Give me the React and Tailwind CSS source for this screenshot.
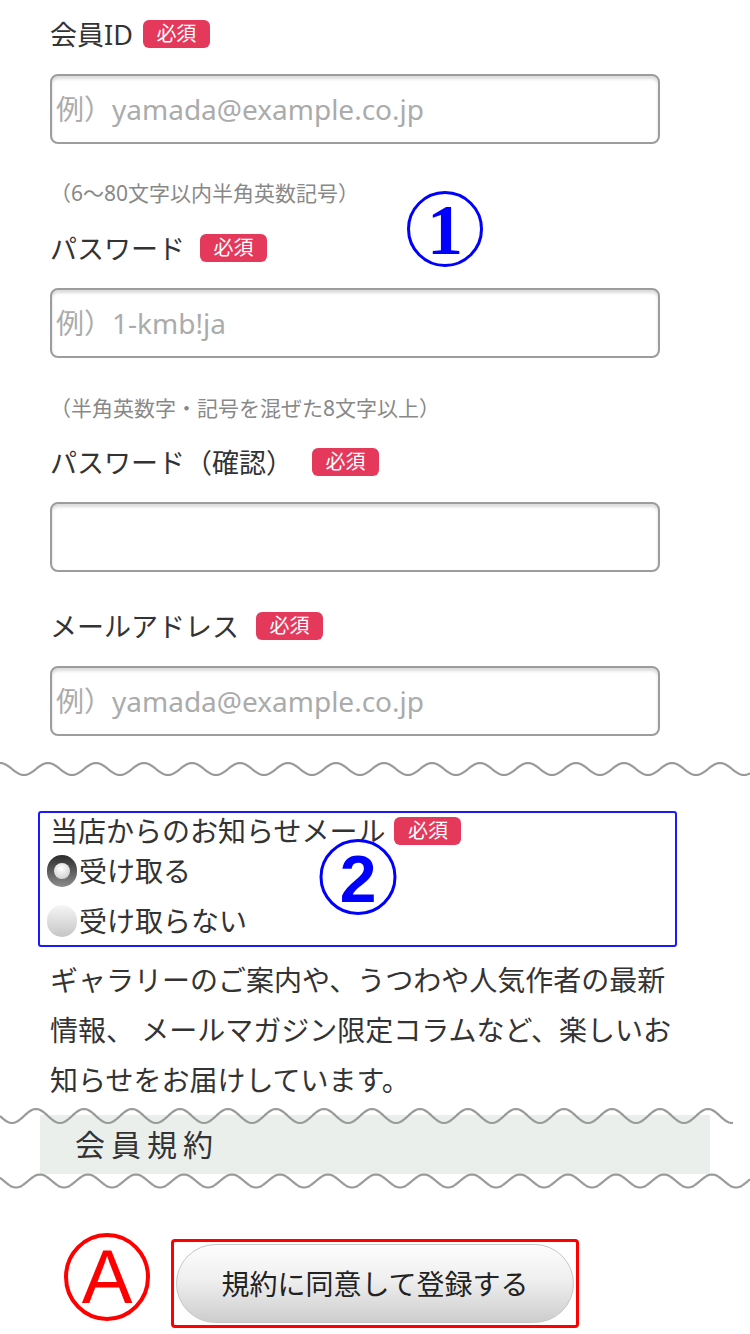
import React from "react";

function wavePath(width, amp, period, phase) {
  const pts = [];
  for (let x = 0; x <= width; x += 1) {
    const y = 10 - amp * Math.cos((2 * Math.PI * (x - phase)) / period);
    pts.push(`${x === 0 ? "M" : "L"}${x},${y.toFixed(2)}`);
  }
  return pts.join(" ");
}

function Wave({ width = 750, amp = 6, phase = 0 }) {
  return (
    <svg width={width} height="20" viewBox={`0 0 ${width} 20`} className="block">
      <path d={wavePath(width, amp, 48, phase)} fill="none" stroke="#9a9a9a" strokeWidth="2.2" />
    </svg>
  );
}

function Badge({ className }) {
  return (
    <span
      className={
        "inline-flex h-[28px] w-[67px] items-center justify-center rounded-[6px] bg-[#e4395b] text-[20px] leading-none text-white " +
        className
      }
    >
      必須
    </span>
  );
}

function Field({ label, gap, placeholder, className }) {
  return (
    <div className={className}>
      <div className="flex h-[40px] items-center">
        <span className="text-[27px] leading-none text-[#333]">{label}</span>
        <Badge className={gap} />
      </div>
      <input
        readOnly
        placeholder={placeholder}
        className="mt-[20px] block h-[70px] w-[610px] rounded-[8px] border-2 border-[#9c9c9c] bg-white pl-[4px] text-[28px] text-[#333] shadow-[inset_0_3px_3px_rgba(0,0,0,0.14)] outline-none placeholder:text-[#ababab]"
      />
    </div>
  );
}

function Hint({ children, className }) {
  return (
    <div className={"flex h-[30px] items-center text-[21px] leading-none text-[#888] " + className}>
      {children}
    </div>
  );
}

export default function App() {
  return (
    <div className="relative h-[1334px] w-[750px] overflow-hidden bg-white font-['Noto_Sans','Noto_Sans_CJK_JP',sans-serif] text-[#333]">
      {/* form section */}
      <div className="pl-[50px] pt-[14px]">
        <Field label="会員ID" gap="ml-[10px]" placeholder="例）yamada@example.co.jp" />
        <Hint className="mt-[34px]">（6〜80文字以内半角英数記号）</Hint>
        <Field className="mt-[20px]" label="パスワード" gap="ml-[15px]" placeholder="例）1-kmb!ja" />
        <Hint className="mt-[35px]">（半角英数字・記号を混ぜた8文字以上）</Hint>
        <Field className="mt-[19px]" label="パスワード（確認）" gap="ml-[19px]" placeholder="" />
        <Field className="mt-[34px]" label="メールアドレス" gap="ml-[17px]" placeholder="例）yamada@example.co.jp" />
      </div>

      <div className="mt-[23px]">
        <Wave amp={6} phase={0} />
      </div>

      {/* mail preference box */}
      <div className="ml-[38px] mt-[32px] h-[136px] w-[639px] rounded-[3px] border-2 border-[#1a1aff] pl-[10px]">
        <div className="flex h-[36px] items-center">
          <span className="text-[28px] leading-none text-[#333]">当店からのお知らせメール</span>
          <Badge className="ml-[9px]" />
        </div>
        <div className="mt-[2px] flex h-[40px] items-center">
          <span className="-ml-[3px] flex h-[32px] w-[30px] items-center justify-center rounded-full bg-[linear-gradient(to_bottom,#2c2c2c,#8c8c8c)]">
            <span className="h-[16px] w-[16px] rounded-full bg-[radial-gradient(circle_at_45%_35%,#ffffff,#c4c4c4)]" />
          </span>
          <span className="ml-[2px] text-[28px] leading-none text-[#333]">受け取る</span>
        </div>
        <div className="mt-[10px] flex h-[40px] items-center">
          <span className="-ml-[3px] h-[32px] w-[30px] rounded-full bg-[linear-gradient(to_bottom,#f6f6f6,#c6c6c6)]" />
          <span className="ml-[2px] text-[28px] leading-none text-[#333]">受け取らない</span>
        </div>
      </div>

      {/* description */}
      <div className="ml-[50px] mt-[8px] text-[28px] leading-[50px] text-[#333]">
        <div className="whitespace-nowrap">ギャラリーのご案内や、うつわや人気作者の最新</div>
        <div className="whitespace-nowrap">情報、 メールマガジン限定コラムなど、楽しいお</div>
        <div className="whitespace-nowrap">知らせをお届けしています。</div>
      </div>

      {/* cut section with terms heading */}
      <div className="relative h-[80px]">
        <div className="ml-[40px] mt-[10px] flex h-[59px] w-[670px] items-center bg-[#ebefec] pl-[35px] text-[30px] leading-none tracking-[6px] text-[#333]">
          会員規約
        </div>
        <div className="absolute left-0 top-[-9px]">
          <Wave width={733} amp={7} phase={36} />
        </div>
        <div className="absolute left-0 top-[56px]">
          <Wave amp={6.5} phase={40} />
        </div>
      </div>

      {/* submit */}
      <div className="ml-[171px] mt-[44px] h-[89px] w-[408px] rounded-[4px] border-[3px] border-[#ff0000] p-[2px]">
        <button className="flex h-[79px] w-[398px] items-center justify-center rounded-full border border-[#c6c6c6] bg-[linear-gradient(to_bottom,#fdfdfd,#efefef_45%,#cdcdcd)] text-[28px] leading-none text-[#222]">
          規約に同意して登録する
        </button>
      </div>

      {/* annotations */}
      <svg className="absolute left-[405px] top-[189px]" width="80" height="80" viewBox="0 0 80 80">
        <circle cx="40" cy="40" r="36.5" fill="none" stroke="#0000ff" strokeWidth="3" />
        <text x="40" y="65" textAnchor="middle" fontFamily="Liberation Serif" fontWeight="700" fontSize="72" fill="#0000ff">1</text>
      </svg>
      <svg className="absolute left-[318px] top-[838px]" width="80" height="80" viewBox="0 0 80 80">
        <ellipse cx="40" cy="39" rx="37" ry="36.5" fill="none" stroke="#0000ff" strokeWidth="3" />
        <text x="40" y="64" textAnchor="middle" fontFamily="Liberation Sans" fontWeight="700" fontSize="66" fill="#0000ff">2</text>
      </svg>
      <svg className="absolute left-[62px] top-[1232px]" width="90" height="90" viewBox="0 0 90 90">
        <ellipse cx="45" cy="45" rx="41" ry="42" fill="none" stroke="#ff0000" strokeWidth="4" />
        <text x="45" y="71" textAnchor="middle" fontFamily="Liberation Sans" fontSize="76" fill="#ff0000">A</text>
      </svg>
    </div>
  );
}
